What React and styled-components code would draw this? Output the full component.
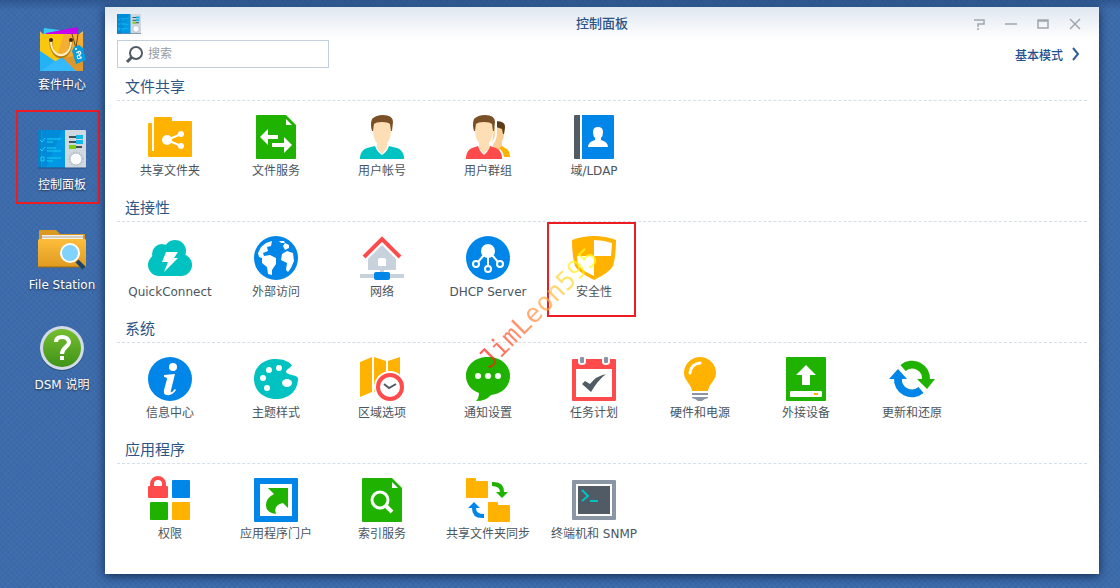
import React, { useState } from 'react'
import styled, { createGlobalStyle } from 'styled-components'

const colors = {
  desktop: '#3c6bab',
  heading: '#2c5585',
  text: '#4b5560',
  green: '#1fb200',
  blue: '#0086e8',
  orange: '#ffb300',
  teal: '#00c3c1',
  red: '#ff4b4b',
  slate: '#505b66',
  grey: '#8a96a3',
  pale: '#c8d2dd',
  mark: '#ed1c24',
}

const GlobalStyle = createGlobalStyle`
  * {
    box-sizing: border-box;
  }
  body {
    margin: 0;
    font-family: "DejaVu Sans", "Noto Sans CJK SC", sans-serif;
    font-size: 12px;
    color: ${colors.text};
  }
  button, input {
    font: inherit;
    color: inherit;
  }
  button {
    padding: 0;
    border: 0;
    background: none;
    cursor: pointer;
  }
  svg {
    display: block;
    overflow: visible;
  }
`

const Desktop = styled.div`
  display: flex;
  min-height: 100vh;
  padding: 7px 21px 14px 0;
  background-color: ${colors.desktop};
  background-image:
    linear-gradient(rgba(20, 50, 95, 0.35), rgba(20, 50, 95, 0) 10px),
    repeating-linear-gradient(45deg, rgba(255, 255, 255, 0.01) 0 2px, rgba(0, 20, 60, 0.02) 2px 4px),
    repeating-linear-gradient(-45deg, rgba(255, 255, 255, 0.01) 0 2px, rgba(0, 20, 60, 0.02) 2px 4px);
`

const Dock = styled.nav`
  display: flex;
  flex-direction: column;
  flex: 0 0 105px;
  padding-left: 19px;
`

const DockItem = styled.button`
  position: relative;
  display: flex;
  flex-direction: column;
  align-items: center;
  gap: 5px;
  height: 100px;
  padding-top: 17px;
  color: #fff;
  line-height: 16px;
  white-space: nowrap;
  text-shadow: 0 1px 2px rgba(0, 0, 0, 0.6);
`

const DockMark = styled.span`
  position: absolute;
  inset: 3px 5px 3px -3px;
  border: 2px solid ${colors.mark};
`

const Window = styled.main`
  position: relative;
  flex: 1;
  min-width: 0;
  background: linear-gradient(#dfe7f0, #fff 32px) #fff;
  box-shadow: 0 -3px 0 #2b578d, 0 2px 9px rgba(8, 28, 60, 0.8);
`

const TitleBar = styled.header`
  display: grid;
  grid-template-columns: 1fr auto 1fr;
  align-items: center;
  height: 33px;
  padding: 0 8px;
`

const AppIcon = styled.span`
  padding-left: 4px;
`

const Title = styled.h1`
  margin: 0;
  font-size: 13px;
  font-weight: 500;
  line-height: 20px;
  color: ${colors.heading};
`

const Controls = styled.div`
  display: flex;
  justify-content: flex-end;
`

const ControlBtn = styled.button`
  display: flex;
  align-items: center;
  justify-content: center;
  width: 32px;
  height: 24px;
`

const Body = styled.div`
  padding: 0 12px;
`

const Toolbar = styled.div`
  display: flex;
  align-items: center;
  justify-content: space-between;
  padding-right: 8px;
  margin-bottom: 5px;
`

const SearchBox = styled.label`
  display: flex;
  align-items: center;
  gap: 5px;
  width: 212px;
  height: 28px;
  padding: 0 8px;
  border: 1px solid #c3cfdc;
  background: #fff;
`

const SearchInput = styled.input`
  flex: 1;
  min-width: 0;
  padding: 0;
  border: 0;
  outline: 0;
  background: none;
  line-height: 20px;
  &::placeholder {
    color: #949ca5;
    opacity: 1;
  }
`

const ModeBtn = styled.button`
  display: flex;
  align-items: center;
  gap: 9px;
  font-weight: 500;
  color: #1f4f8c;
`

const SectionTitle = styled.h2`
  margin: 0;
  padding: 2px 0 0 8px;
  border-bottom: 1px dashed #d3dfeb;
  font-size: 15px;
  font-weight: 400;
  line-height: 25px;
  color: ${colors.heading};
`

const Tiles = styled.div`
  display: flex;
  flex-wrap: wrap;
`

const Tile = styled.button`
  position: relative;
  display: flex;
  flex-direction: column;
  align-items: center;
  gap: 4px;
  width: 106px;
  padding: 14px 0 15px;
  line-height: 16px;
  white-space: nowrap;
`

const TileMark = styled.span`
  position: absolute;
  inset: 0 11px -2px 6px;
  border: 2px solid ${colors.mark};
`

const Watermark = styled.span`
  position: absolute;
  z-index: 1;
  top: 286px;
  left: 355px;
  transform: rotate(-45deg);
  font-family: "DejaVu Sans Mono", monospace;
  font-size: 26px;
  line-height: 30px;
  color: transparent;
  background: linear-gradient(90deg, #ff1010, #ff9a40 50%, #ffff20 90%);
  background-clip: text;
  opacity: 0.7;
  pointer-events: none;
`

const FilePage = () => (
  <>
    <path d="M3 0H32L42 10V43Q42 44 41 44H3Q2 44 2 43V1Q2 0 3 0Z" fill={colors.green} />
    <path d="M32 4V10H38Z" fill="#fff" />
  </>
)

const Person = () => (
  <>
    <path d="M13 7Q22 3 31 8V17Q30 25 27 28V33L22 39L17 33V28Q14 25 13 17Z" fill="#fedfb5" />
    <path d="M12 16Q10 9 12 4Q16 0 23 0Q33 0 33 7L32 16H31L30 9Q28 7 22 7T14 9L13 16Z" fill="#7a5026" />
  </>
)

const tileIcons = {
  share: (
    <>
      <path d="M1 8H3Q4 8 4 9V36H6V3Q6 2 7 2H23Q24 2 24 3V6H43Q44 6 44 7V41Q44 42 43 42H1Q0 42 0 41V9Q0 8 1 8Z" fill={colors.orange} />
      <path d="M33 19L19 25L33 31" fill="none" stroke="#fff" strokeWidth="2" />
      <circle cx="19" cy="25" r="5" fill="#fff" />
      <circle cx="33" cy="19" r="3" fill="#fff" />
      <circle cx="33" cy="31" r="3" fill="#fff" />
    </>
  ),
  fileService: (
    <>
      <FilePage />
      <path d="M6 22L14 14V20H24V24H14V30Z" fill="#fff" />
      <path d="M38 30L30 22V28H18V32H30V38Z" fill="#fff" />
    </>
  ),
  user: (
    <>
      <Person />
      <path d="M0 44V42Q1 35 7 33L15 31Q17 37 22 40Q27 37 29 31L37 33Q43 35 44 42V44Z" fill={colors.teal} />
    </>
  ),
  group: (
    <>
      <path d="M28 12H38Q39 22 36 26V32L31 38L26 30Z" fill="#fbcf93" />
      <path d="M30 6Q40 6 39 13L38 19H37L36 14L30 12Z" fill="#5c3d17" />
      <path d="M36 31L39 33Q44 35 44 42H38Q37 36 33 33Z" fill={colors.orange} />
      <g transform="translate(-4 0)">
        <path d="M34 3V17Q34 25 30 29V31" fill="none" stroke="#fff" strokeWidth="2" />
        <Person />
      </g>
      <path d="M0 44V42Q1 35 6 33L12 31Q14 37 18 40Q22 37 24 31L30 33Q35 35 36 42V44Z" fill={colors.red} />
    </>
  ),
  ldap: (
    <>
      <path d="M3 0H8V44H3Q2 44 2 43V1Q2 0 3 0Z" fill={colors.slate} />
      <path d="M10 0H41Q42 0 42 1V43Q42 44 41 44H10Z" fill={colors.blue} />
      <path d="M26 12Q31 12 31 17Q31 21 29 23V25Q36 27 36 32H16Q16 27 23 25V23Q21 21 21 17Q21 12 26 12Z" fill="#fff" />
    </>
  ),
  cloud: (
    <>
      <g fill={colors.teal}>
        <circle cx="14" cy="18" r="10" />
        <circle cx="27" cy="15" r="11" />
        <circle cx="11" cy="29" r="11" />
        <circle cx="33" cy="29" r="11" />
        <path d="M10 20H34V40H10Z" />
      </g>
      <path d="M18 16H30L26 22H30L16 36L20 26H14Z" fill="#fff" />
    </>
  ),
  globe: (
    <>
      <circle cx="22" cy="22" r="22" fill={colors.blue} />
      <g fill="#fff">
        <path d="M18 5L12 7L7 11L4 17L5 21L8 22L8 27L13 31L14 38L18 39L18 34L22 28V22L16 19L10 20L9 17L14 15L13 11L17 10Z" />
        <path d="M28 18L33 15L39 17L40 25L37 32L34 36L32 34L33 27L27 24Z" />
        <path d="M29 10L31 7L35 9V12L31 14Z" />
        <path d="M25 5L30 5L31 7L27 7Z" />
      </g>
    </>
  ),
  network: (
    <>
      <path d="M22 9L36 23V34H8V23Z" fill={colors.pale} />
      <path d="M0 38H44V42H0ZM20 34H24V38H20Z" fill={colors.pale} />
      <path d="M18 30V24Q18 22 20 22H24Q26 22 26 24V30Z" fill="#fff" />
      <path d="M4 21L22 3L40 21" fill="none" stroke={colors.red} strokeWidth="4" />
      <rect x="14" y="36" width="16" height="8" rx="2" fill={colors.blue} />
    </>
  ),
  dhcp: (
    <>
      <circle cx="22" cy="22" r="22" fill={colors.blue} />
      <circle cx="22" cy="15" r="7" fill="#fff" />
      <g fill="none" stroke="#fff" strokeWidth="2">
        <path d="M18 19L12 26M22 20V29M26 19L32 26" />
        <circle cx="10" cy="28" r="3" />
        <circle cx="22" cy="33" r="3" />
        <circle cx="34" cy="28" r="3" />
      </g>
    </>
  ),
  shield: (
    <>
      <path d="M22 0Q33 0 44 4Q44 20 41 30Q38 36 22 44Q6 36 3 30Q0 20 0 4Q11 0 22 0Z" fill={colors.orange} />
      <path d="M22 4Q31 4 40 7L39 20H22ZM5 20H22V40Q9 34 7 30Q5 25 5 20Z" fill="#fff" />
    </>
  ),
  info: (
    <>
      <circle cx="22" cy="22" r="22" fill={colors.blue} />
      <circle cx="25" cy="10" r="4" fill="#fff" />
      <path d="M16 18L27 17L23 33Q22 36 24 35L27 32L28 33Q24 39 19 38Q15 38 16 33L19 22Q19 20 16 20Z" fill="#fff" />
    </>
  ),
  palette: (
    <>
      <path d="M22 2C30 2 35 5 38 8C37 11 32 12 32 15C34 19 42 17 44 21C44 34 35 42 22 42C9 42 0 33 0 22C0 10 9 2 22 2Z" fill={colors.teal} />
      <g fill="#fff">
        <circle cx="25" cy="11" r="3" />
        <circle cx="15" cy="13" r="3" />
        <circle cx="9" cy="21" r="3" />
        <circle cx="13" cy="31" r="3" />
        <ellipse cx="33" cy="26" rx="5" ry="4" />
      </g>
    </>
  ),
  region: (
    <>
      <path d="M0 5L12 0V35L0 40ZM14 0L26 4V39L14 35ZM28 4L40 0V35H28Z" fill={colors.orange} />
      <circle cx="30" cy="30" r="16" fill="#fff" />
      <circle cx="30" cy="30" r="12" fill="#fff" stroke={colors.red} strokeWidth="4" />
      <path d="M24 27L29 31L36 27" fill="none" stroke={colors.slate} strokeWidth="2" />
    </>
  ),
  chat: (
    <>
      <path d="M22 0C35 0 44 8 44 19C44 29 36 37 25 38Q20 44 10 44Q13 41 13 36C5 33 0 27 0 19C0 8 9 0 22 0Z" fill={colors.green} />
      <g fill="#fff">
        <circle cx="12" cy="19" r="3" />
        <circle cx="22" cy="19" r="3" />
        <circle cx="32" cy="19" r="3" />
      </g>
    </>
  ),
  calendar: (
    <>
      <rect y="2" width="44" height="42" rx="1" fill={colors.red} />
      <path d="M4 12H40V40H4ZM6 1H14V5Q14 8 10 8Q6 8 6 5ZM30 1H38V5Q38 8 34 8Q30 8 30 5Z" fill="#fff" />
      <rect x="8" width="4" height="6" rx="1" fill={colors.grey} />
      <rect x="32" width="4" height="6" rx="1" fill={colors.grey} />
      <path d="M10 27L13 24L18 27Q24 19 34 17Q26 23 19 35Z" fill={colors.slate} />
    </>
  ),
  bulb: (
    <>
      <path d="M22 0A16 16 0 0 1 38 16C38 24 31 26 30 34H14C13 26 6 24 6 16A16 16 0 0 1 22 0Z" fill={colors.orange} />
      <path d="M12 16Q13 7 22 6" fill="none" stroke="#fff" strokeWidth="3" strokeLinecap="round" />
      <path d="M14 36H30V38H14ZM14 40H30V41Q26 42 24 44H20Q18 42 14 41Z" fill={colors.grey} />
    </>
  ),
  device: (
    <>
      <rect x="2" width="40" height="44" rx="1" fill={colors.green} />
      <path d="M22 8L32 18H26V28H18V18H12Z" fill="#fff" />
      <rect x="6" y="34" width="32" height="6" rx="1" fill="#fff" />
      <rect x="30" y="36" width="4" height="2" fill={colors.orange} />
    </>
  ),
  update: (
    <>
      <path d="M13 11A14 14 0 0 1 36 23" fill="none" stroke={colors.green} strokeWidth="8" />
      <path d="M27 22H45L37 32Z" fill={colors.green} />
      <path d="M31 33A14 14 0 0 1 8 21" fill="none" stroke={colors.blue} strokeWidth="8" />
      <path d="M-1 22H17L8 12Z" fill={colors.blue} />
    </>
  ),
  privilege: (
    <>
      <path d="M4 9V6A6 6 0 0 1 16 6V9" fill="none" stroke={colors.red} strokeWidth="4" />
      <rect y="8" width="20" height="12" rx="1" fill={colors.red} />
      <rect x="24" y="2" width="18" height="18" rx="1" fill={colors.blue} />
      <rect x="2" y="24" width="18" height="18" rx="1" fill={colors.green} />
      <rect x="24" y="24" width="18" height="18" rx="1" fill={colors.orange} />
    </>
  ),
  portal: (
    <>
      <rect width="44" height="44" rx="1" fill={colors.blue} />
      <rect x="6" y="6" width="32" height="32" fill="#fff" />
      <path d="M14 10H34V30L29 25Q19 27 22 36Q12 35 12 27Q12 20 20 16Z" fill={colors.green} />
    </>
  ),
  index: (
    <>
      <FilePage />
      <circle cx="20" cy="22" r="8" fill="none" stroke="#fff" strokeWidth="3" />
      <path d="M26 28L32 34" stroke="#fff" strokeWidth="4" />
    </>
  ),
  sync: (
    <>
      <g fill={colors.orange}>
        <path d="M1 0H9Q10 0 10 1V3H21Q22 3 22 4V19Q22 20 21 20H1Q0 20 0 19V1Q0 0 1 0Z" />
        <path d="M23 24H31Q32 24 32 25V27H43Q44 27 44 28V43Q44 44 43 44H23Q22 44 22 43V25Q22 24 23 24Z" />
      </g>
      <path d="M26 4Q38 3 38 14H42L36 20L30 14H34Q34 8 26 8Z" fill={colors.green} />
      <path d="M18 40Q6 41 6 30H2L8 24L14 30H10Q10 36 18 36Z" fill={colors.blue} />
    </>
  ),
  terminal: (
    <>
      <rect y="2" width="44" height="40" rx="1" fill={colors.grey} />
      <rect x="4" y="6" width="36" height="32" fill="#fff" />
      <rect x="6" y="8" width="32" height="28" fill={colors.slate} />
      <path d="M10 12L16 18L10 23M18 23H26" fill="none" stroke={colors.teal} strokeWidth="2" />
    </>
  ),
}

const PanelArt = ({ width, height }) => (
  <svg width={width} height={height} viewBox="0 0 48 39" preserveAspectRatio="none" aria-hidden="true">
    <rect width="28" height="38" rx="1" fill="#0097e4" />
    <path d="M4 0H24L8 38H4Z" fill="#008bd9" />
    <rect width="3" height="38" fill="#0a80c8" />
    <path d="M27 0H47Q48 0 48 1V38H27Z" fill="#cfd7df" />
    <path d="M0 38H48" stroke="#244d80" strokeWidth="1" />
    <path d="M9 9H23M9 12H15M9 18H18M9 21H23M9 28H23M9 31H15M2 10L4 12L7 8M2 19L4 21L7 17M3 27H6V31H3Z" fill="none" stroke="#19d1f5" strokeWidth="1" />
    <path d="M31 7H40M31 12H40M36 17H44" stroke="#444e57" strokeWidth="2" />
    <path d="M38 7H45M38 12H45" stroke="#10b8ee" strokeWidth="4" />
    <path d="M31 17H38" stroke="#7bd016" strokeWidth="4" />
    <circle cx="38" cy="29" r="7" fill="none" stroke="#a4adb6" strokeWidth="1" strokeDasharray="1 2" />
    <circle cx="38" cy="29" r="6" fill="#fafbfc" stroke="#b4bdc6" strokeWidth="1" />
  </svg>
)

const PackageIcon = () => (
  <svg width="48" height="48" viewBox="0 0 48 48" aria-hidden="true">
    <path d="M6 4L21 6V14H5Z" fill="#35cbf4" />
    <path d="M8 9L40 3V14H8Z" fill="#c800f0" />
    <path d="M2 7L6 11H40L45 7V12H2Z" fill="#e8c25a" />
    <rect x="2" y="10" width="43" height="37" rx="1" fill="#f8c70e" />
    <path d="M26 10H45V40L20 29Z" fill="#f5ae35" />
    <path d="M2 27L32 47H2Z" fill="#23b3f5" />
    <path d="M20 35L45 30V47H38Z" fill="#dd982d" />
    <path d="M2 47L24 33L38 47Z" fill="#35b9fb" />
    <path d="M13 17C13 38 33 38 33 17" fill="none" stroke="#b57a12" strokeWidth="3" />
    <path d="M13 17C13 36 33 36 33 17" fill="none" stroke="#ffeec0" strokeWidth="2" />
    <circle cx="13" cy="16" r="2" fill="#3b2a10" />
    <circle cx="33" cy="16" r="2" fill="#3b2a10" />
    <path d="M34 10L38 24M40 10L38 24" stroke="#6c4811" strokeWidth="1" />
    <path d="M36 23L41 21L45 24L48 36L38 40L34 27Z" fill="#079dde" />
    <path d="M38 29L42 27L43 30L39 32L40 35L44 33M40 27L43 35" fill="none" stroke="#fff" strokeWidth="1" />
    <circle cx="38" cy="25" r="1" fill="#fff" />
  </svg>
)

const FileStationIcon = () => (
  <svg width="48" height="48" viewBox="0 0 48 48" aria-hidden="true">
    <defs>
      <linearGradient id="folder" x2="0" y2="1">
        <stop stopColor="#fdbd3c" />
        <stop offset="1" stopColor="#e09b20" />
      </linearGradient>
    </defs>
    <path d="M2 6H18L22 10H47V20H1V7Z" fill="#dc9921" />
    <path d="M4 11H45V18H4Z" fill="#f2f0e8" />
    <path d="M4 13H45" stroke="#b6ac98" strokeWidth="1" />
    <path d="M1 15H47L48 16V43H0V16Z" fill="url(#folder)" />
    <path d="M0 43H48" stroke="#9c6b10" strokeWidth="1" />
    <path d="M39 37L46 44" stroke="#1c4468" strokeWidth="4" />
    <circle cx="32" cy="29" r="9" fill="#82d3fb" stroke="#fff" strokeWidth="2" />
  </svg>
)

const HelpIcon = () => (
  <svg width="48" height="48" viewBox="0 0 48 48" aria-hidden="true">
    <defs>
      <linearGradient id="help" x2="0" y2="1">
        <stop stopColor="#76bd30" />
        <stop offset="1" stopColor="#3f9317" />
      </linearGradient>
    </defs>
    <circle cx="24" cy="25" r="22" fill="#254d7c" />
    <circle cx="24" cy="24" r="22" fill="#d3dbe8" />
    <circle cx="24" cy="24" r="19" fill="url(#help)" />
    <path d="M18 18Q18 13 24 13T31 18C31 23 24 23 24 30" fill="none" stroke="#fff" strokeWidth="4" />
    <rect x="22" y="32" width="4" height="4" fill="#fff" />
  </svg>
)

const ControlPanelIcon = () => (
  <svg width="48" height="48" viewBox="0 0 48 48" aria-hidden="true">
    <g transform="translate(0 6)">
      <PanelArt width={48} height={39} />
    </g>
  </svg>
)

const dockItems = [
  { label: '套件中心', icon: <PackageIcon /> },
  { label: '控制面板', icon: <ControlPanelIcon />, marked: true },
  { label: 'File Station', icon: <FileStationIcon /> },
  { label: 'DSM 说明', icon: <HelpIcon /> },
]

const sections = [
  {
    title: '文件共享',
    items: [
      { label: '共享文件夹', icon: 'share' },
      { label: '文件服务', icon: 'fileService' },
      { label: '用户帐号', icon: 'user' },
      { label: '用户群组', icon: 'group' },
      { label: '域/LDAP', icon: 'ldap' },
    ],
  },
  {
    title: '连接性',
    items: [
      { label: 'QuickConnect', icon: 'cloud' },
      { label: '外部访问', icon: 'globe' },
      { label: '网络', icon: 'network' },
      { label: 'DHCP Server', icon: 'dhcp' },
      { label: '安全性', icon: 'shield', marked: true },
    ],
  },
  {
    title: '系统',
    items: [
      { label: '信息中心', icon: 'info' },
      { label: '主题样式', icon: 'palette' },
      { label: '区域选项', icon: 'region' },
      { label: '通知设置', icon: 'chat' },
      { label: '任务计划', icon: 'calendar' },
      { label: '硬件和电源', icon: 'bulb' },
      { label: '外接设备', icon: 'device' },
      { label: '更新和还原', icon: 'update' },
    ],
  },
  {
    title: '应用程序',
    items: [
      { label: '权限', icon: 'privilege' },
      { label: '应用程序门户', icon: 'portal' },
      { label: '索引服务', icon: 'index' },
      { label: '共享文件夹同步', icon: 'sync' },
      { label: '终端机和 SNMP', icon: 'terminal' },
    ],
  },
]

const controls = [
  { name: '帮助', path: 'M1 2H11V6H5V9M4 11H6' },
  { name: '最小化', path: 'M0 6H12' },
  { name: '最大化', path: 'M1 2H11V10H1ZM1 3H11' },
  { name: '关闭', path: 'M1 1L11 11M11 1L1 11' },
]

function Section({ title, items }) {
  return (
    <section>
      <SectionTitle>{title}</SectionTitle>
      <Tiles>
        {items.map((item) => (
          <Tile key={item.label} type="button">
            <svg width="44" height="44" viewBox="0 0 44 44" aria-hidden="true">
              {tileIcons[item.icon]}
            </svg>
            {item.label}
            {item.marked && <TileMark />}
          </Tile>
        ))}
      </Tiles>
    </section>
  )
}

function App() {
  const [query, setQuery] = useState('')

  return (
    <Desktop>
      <GlobalStyle />
      <Dock>
        {dockItems.map((item) => (
          <DockItem key={item.label} type="button">
            {item.icon}
            {item.label}
            {item.marked && <DockMark />}
          </DockItem>
        ))}
      </Dock>
      <Window>
        <TitleBar>
          <AppIcon>
            <PanelArt width={24} height={20} />
          </AppIcon>
          <Title>控制面板</Title>
          <Controls>
            {controls.map((control) => (
              <ControlBtn key={control.name} type="button" aria-label={control.name}>
                <svg width="12" height="12" viewBox="0 0 12 12" fill="none" stroke="#a0a6ae" strokeWidth="1.5">
                  <path d={control.path} />
                </svg>
              </ControlBtn>
            ))}
          </Controls>
        </TitleBar>
        <Body>
          <Toolbar>
            <SearchBox>
              <svg width="17" height="17" viewBox="0 0 17 17" fill="none" stroke="#505b66" aria-hidden="true">
                <circle cx="10" cy="7" r="6" strokeWidth="2" />
                <path d="M6 11L1 16" strokeWidth="3" />
              </svg>
              <SearchInput
                type="text"
                aria-label="搜索"
                placeholder="搜索"
                value={query}
                onChange={(e) => setQuery(e.target.value)}
              />
            </SearchBox>
            <ModeBtn type="button">
              基本模式
              <svg width="7" height="12" viewBox="0 0 7 12" fill="none" stroke="#2f5f9b" strokeWidth="2" aria-hidden="true">
                <path d="M1 0L6 6L1 12" />
              </svg>
            </ModeBtn>
          </Toolbar>
          {sections.map((section) => (
            <Section key={section.title} title={section.title} items={section.items} />
          ))}
        </Body>
        <Watermark>JimLeon595</Watermark>
      </Window>
    </Desktop>
  )
}

export default App
